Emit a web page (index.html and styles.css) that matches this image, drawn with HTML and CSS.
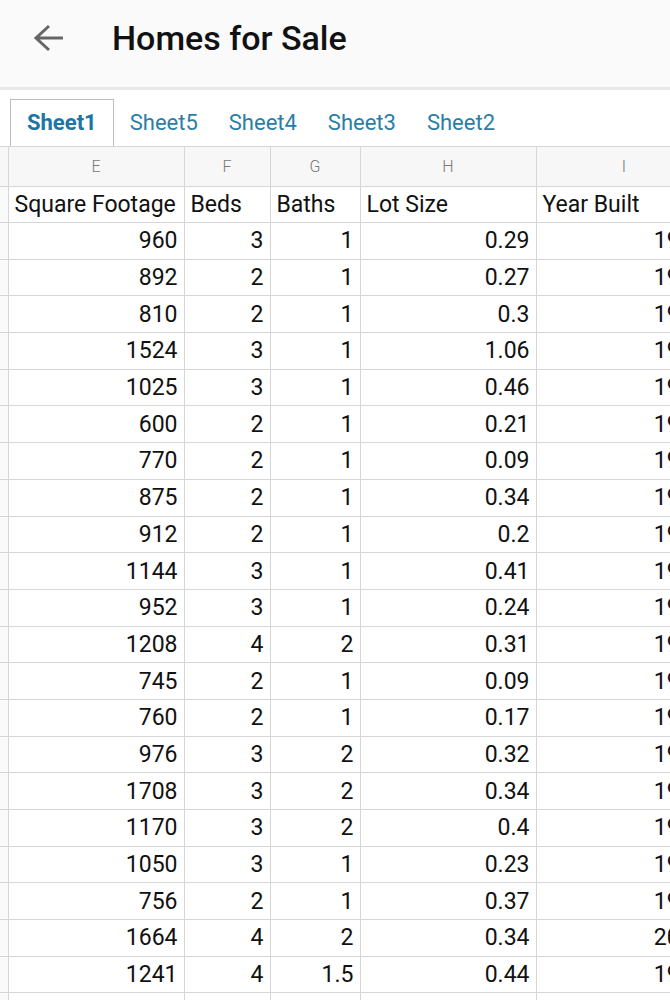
FILE: index.html
```html
<!DOCTYPE html>
<html lang="en">
<head>
  <meta charset="UTF-8">
  <meta name="viewport" content="width=device-width, initial-scale=1.0">
  <title>Homes for Sale</title>
  <link rel="stylesheet" href="styles.css">
</head>
<body>
  <div class="topbar">
    <span class="back">
      <svg width="32" height="30" viewBox="0 0 32 30"><path d="M30 14H4 M16 2 L3 14 L16 26" fill="none" stroke="#666" stroke-width="3"/></svg>
    </span>
    <h1>Homes for Sale</h1>
  </div>

  <!-- sheet tabs -->
  <div class="tabs">
    <span class="tab active">Sheet1</span>
    <span class="tab">Sheet5</span>
    <span class="tab">Sheet4</span>
    <span class="tab">Sheet3</span>
    <span class="tab">Sheet2</span>
  </div>

  <div class="grid">
    <table>
      <colgroup>
        <col class="stub"><col class="w176"><col class="w86"><col class="w90"><col class="w176"><col class="w176">
      </colgroup>
      <tr class="letters">
        <td></td><td>E</td><td>F</td><td>G</td><td>H</td><td>I</td>
      </tr>
      <tr class="names">
        <td></td><td>Square Footage</td><td>Beds</td><td>Baths</td><td>Lot Size</td><td>Year Built</td>
      </tr>
      <tr><td></td><td>960</td><td>3</td><td>1</td><td>0.29</td><td>1950</td></tr>
      <tr><td></td><td>892</td><td>2</td><td>1</td><td>0.27</td><td>1955</td></tr>
      <tr><td></td><td>810</td><td>2</td><td>1</td><td>0.3</td><td>1952</td></tr>
      <tr><td></td><td>1524</td><td>3</td><td>1</td><td>1.06</td><td>1948</td></tr>
      <tr><td></td><td>1025</td><td>3</td><td>1</td><td>0.46</td><td>1958</td></tr>
      <tr><td></td><td>600</td><td>2</td><td>1</td><td>0.21</td><td>1947</td></tr>
      <tr><td></td><td>770</td><td>2</td><td>1</td><td>0.09</td><td>1940</td></tr>
      <tr><td></td><td>875</td><td>2</td><td>1</td><td>0.34</td><td>1953</td></tr>
      <tr><td></td><td>912</td><td>2</td><td>1</td><td>0.2</td><td>1951</td></tr>
      <tr><td></td><td>1144</td><td>3</td><td>1</td><td>0.41</td><td>1960</td></tr>
      <tr><td></td><td>952</td><td>3</td><td>1</td><td>0.24</td><td>1956</td></tr>
      <tr><td></td><td>1208</td><td>4</td><td>2</td><td>0.31</td><td>1962</td></tr>
      <tr><td></td><td>745</td><td>2</td><td>1</td><td>0.09</td><td>1945</td></tr>
      <tr><td></td><td>760</td><td>2</td><td>1</td><td>0.17</td><td>1949</td></tr>
      <tr><td></td><td>976</td><td>3</td><td>2</td><td>0.32</td><td>1957</td></tr>
      <tr><td></td><td>1708</td><td>3</td><td>2</td><td>0.34</td><td>1968</td></tr>
      <tr><td></td><td>1170</td><td>3</td><td>2</td><td>0.4</td><td>1963</td></tr>
      <tr><td></td><td>1050</td><td>3</td><td>1</td><td>0.23</td><td>1954</td></tr>
      <tr><td></td><td>756</td><td>2</td><td>1</td><td>0.37</td><td>1946</td></tr>
      <tr><td></td><td>1664</td><td>4</td><td>2</td><td>0.34</td><td>2004</td></tr>
      <tr><td></td><td>1241</td><td>4</td><td>1.5</td><td>0.44</td><td>1959</td></tr>
      <tr><td></td><td>1364</td><td>3</td><td>2</td><td>0.28</td><td>1961</td></tr>
    </table>
  </div>
</body>
</html>
```

FILE: styles.css
```css
body {
  margin: 0;
  font-family: Roboto, "Liberation Sans", sans-serif;
  background: #fff;
  color: #111;
}

.topbar {
  height: 90px;
  box-sizing: border-box;
  padding-bottom: 12px;
  background: #fafafa;
  border-bottom: 3px solid #e8e8e8;
  display: flex;
  align-items: center;
}

.back {
  margin-left: 33px;
  width: 32px;
  display: flex;
  margin-top: 2px;
}

.topbar h1 {
  margin: 0 0 0 47px;
  font-size: 34px;
  font-weight: 500;
  color: #111;
}

.tabs {
  display: flex;
  padding: 9px 0 0 10px;
  height: 47px;
}

.tab {
  padding: 0 14px 0 15px;
  font-size: 22px;
  line-height: 46px;
  color: #2a7ea6;
  border: 1px solid transparent;
  border-bottom: none;
}

.tab.active {
  border-color: #bdbdbd;
  font-weight: bold;
  color: #1c75a5;
  padding: 0 16px;
}

.grid {
  overflow: hidden;
  width: 670px;
}

table {
  border-collapse: collapse;
  table-layout: fixed;
  width: 712px;
}

col.stub { width: 8px; }
col.w176 { width: 176px; }
col.w86 { width: 86px; }
col.w90 { width: 90px; }

td {
  border: 1px solid #d6d6d6;
  height: 36.7px;
  padding: 0 6px;
  font-size: 23px;
  text-align: right;
  white-space: nowrap;
  overflow: hidden;
  box-sizing: border-box;
}

td:first-child {
  padding: 0;
  border-left: none;
  background: #fafafa;
}

tr.letters td {
  height: 40px;
  background: #f7f7f7;
  font-size: 16px;
  color: #777;
  text-align: center;
  font-weight: 300;
}

tr.names td {
  height: 36px;
  text-align: left;
}
```
